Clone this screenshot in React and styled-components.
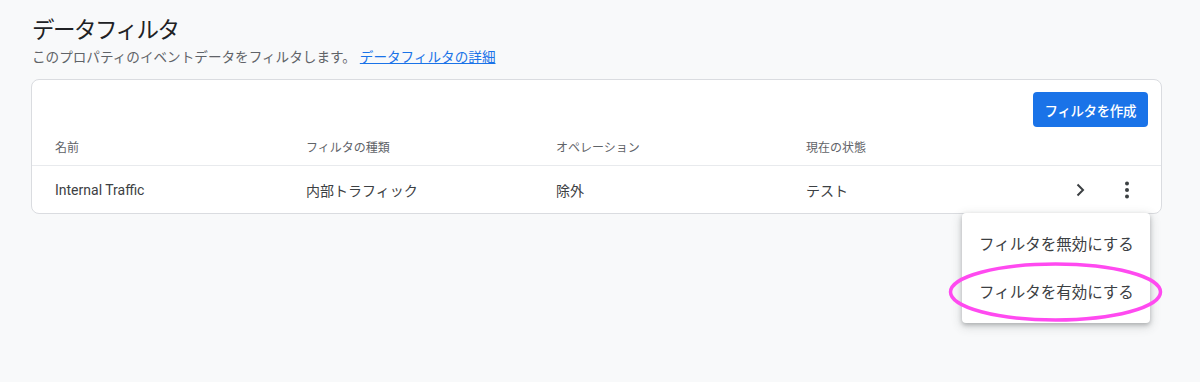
import React from 'react'
import styled, { createGlobalStyle } from 'styled-components'

const GlobalStyle = createGlobalStyle`
  body {
    margin: 0;
    background: #f8f9fa;
    font-family: Roboto, "Noto Sans CJK JP", sans-serif;
    color: #202124;
  }
`

const Page = styled.div`
  padding: 14px 38px 0 31px;
  height: 382px;
  box-sizing: border-box;
  overflow: hidden;
`

const Title = styled.h1`
  margin: 0 0 0 1px;
  font-size: 22.5px;
  line-height: 32px;
  font-weight: 400;
  letter-spacing: -1.5px;
  color: #202124;
`

const Subtitle = styled.p`
  margin: 1px 0 0 1px;
  font-size: 13.6px;
  line-height: 20px;
  color: #5f6368;

  a {
    color: #1a73e8;
    text-decoration: underline;
    margin-left: 4px;
  }
`

const Card = styled.div`
  position: relative;
  margin-top: 12px;
  background: #fff;
  border: 1px solid #dadce0;
  border-radius: 8px;
`

const Toolbar = styled.div`
  display: flex;
  justify-content: flex-end;
  padding: 12px 13px 0 0;
`

const PrimaryButton = styled.button`
  height: 35px;
  padding: 0 12px;
  border: none;
  border-radius: 4px;
  background: #1a73e8;
  color: #fff;
  font-family: inherit;
  font-size: 13.5px;
  font-weight: 500;
  letter-spacing: -0.4px;
`

const Row = styled.div`
  display: grid;
  grid-template-columns: 251px 250px 250px 250px 1fr;
  align-items: center;
  padding-left: 23px;
  height: ${p => (p.$head ? '38px' : '47px')};
  border-bottom: ${p => (p.$head ? '1px solid #e8eaed' : 'none')};
  font-size: ${p => (p.$head ? '12px' : '14px')};
  color: ${p => (p.$head ? '#5f6368' : '#3c4043')};
`

const Actions = styled.div`
  display: flex;
  align-items: center;
  gap: 23px;
  padding-left: 12px;
  color: #3c4043;
`

const IconBtn = styled.span`
  width: 24px;
  height: 24px;
  display: flex;
  align-items: center;
  justify-content: center;
`

const Menu = styled.div`
  position: absolute;
  top: 133px;
  right: 11px;
  width: 188px;
  padding: 6px 0 8px;
  background: #fff;
  border-radius: 4px;
  box-shadow: 0 2px 4px rgba(60, 64, 67, 0.3), 0 3px 10px 2px rgba(60, 64, 67, 0.15);
`

const MenuItem = styled.div`
  height: 48px;
  display: flex;
  align-items: center;
  padding-left: 17px;
  font-size: 15.5px;
  color: #3c4043;
`

const Highlight = styled.svg`
  position: absolute;
  left: -13px;
  top: 49px;
  overflow: visible;
  pointer-events: none;
`

const columns = ['名前', 'フィルタの種類', 'オペレーション', '現在の状態']
const row = ['Internal Traffic', '内部トラフィック', '除外', 'テスト']

const App = () => {
  return (
    <Page>
      <GlobalStyle />
      <Title>データフィルタ</Title>
      <Subtitle>
        このプロパティのイベントデータをフィルタします。
        <a href="#">データフィルタの詳細</a>
      </Subtitle>
      <Card>
        <Toolbar>
          <PrimaryButton>フィルタを作成</PrimaryButton>
        </Toolbar>
        <Row $head>
          {columns.map(c => <div key={c}>{c}</div>)}
          <div />
        </Row>
        <Row>
          {row.map(c => <div key={c}>{c}</div>)}
          <Actions>
            <IconBtn>
              <svg width="24" height="24" viewBox="0 0 24 24">
                <path d="M9.5 6.5l5.5 5.5-5.5 5.5" fill="none" stroke="#3c4043" strokeWidth="2" />
              </svg>
            </IconBtn>
            <IconBtn>
              <svg width="24" height="24" viewBox="0 0 24 24" fill="#3c4043">
                <circle cx="12" cy="5.5" r="2" />
                <circle cx="12" cy="12" r="2" />
                <circle cx="12" cy="18.5" r="2" />
              </svg>
            </IconBtn>
          </Actions>
        </Row>
        <Menu>
          <MenuItem>フィルタを無効にする</MenuItem>
          <MenuItem>フィルタを有効にする</MenuItem>
          <Highlight width="213" height="60" viewBox="0 0 213 60">
            <ellipse cx="106.5" cy="30" rx="105" ry="28" fill="none" stroke="#ff4af0" strokeWidth="3.5" />
          </Highlight>
        </Menu>
      </Card>
    </Page>
  )
}

export default App
